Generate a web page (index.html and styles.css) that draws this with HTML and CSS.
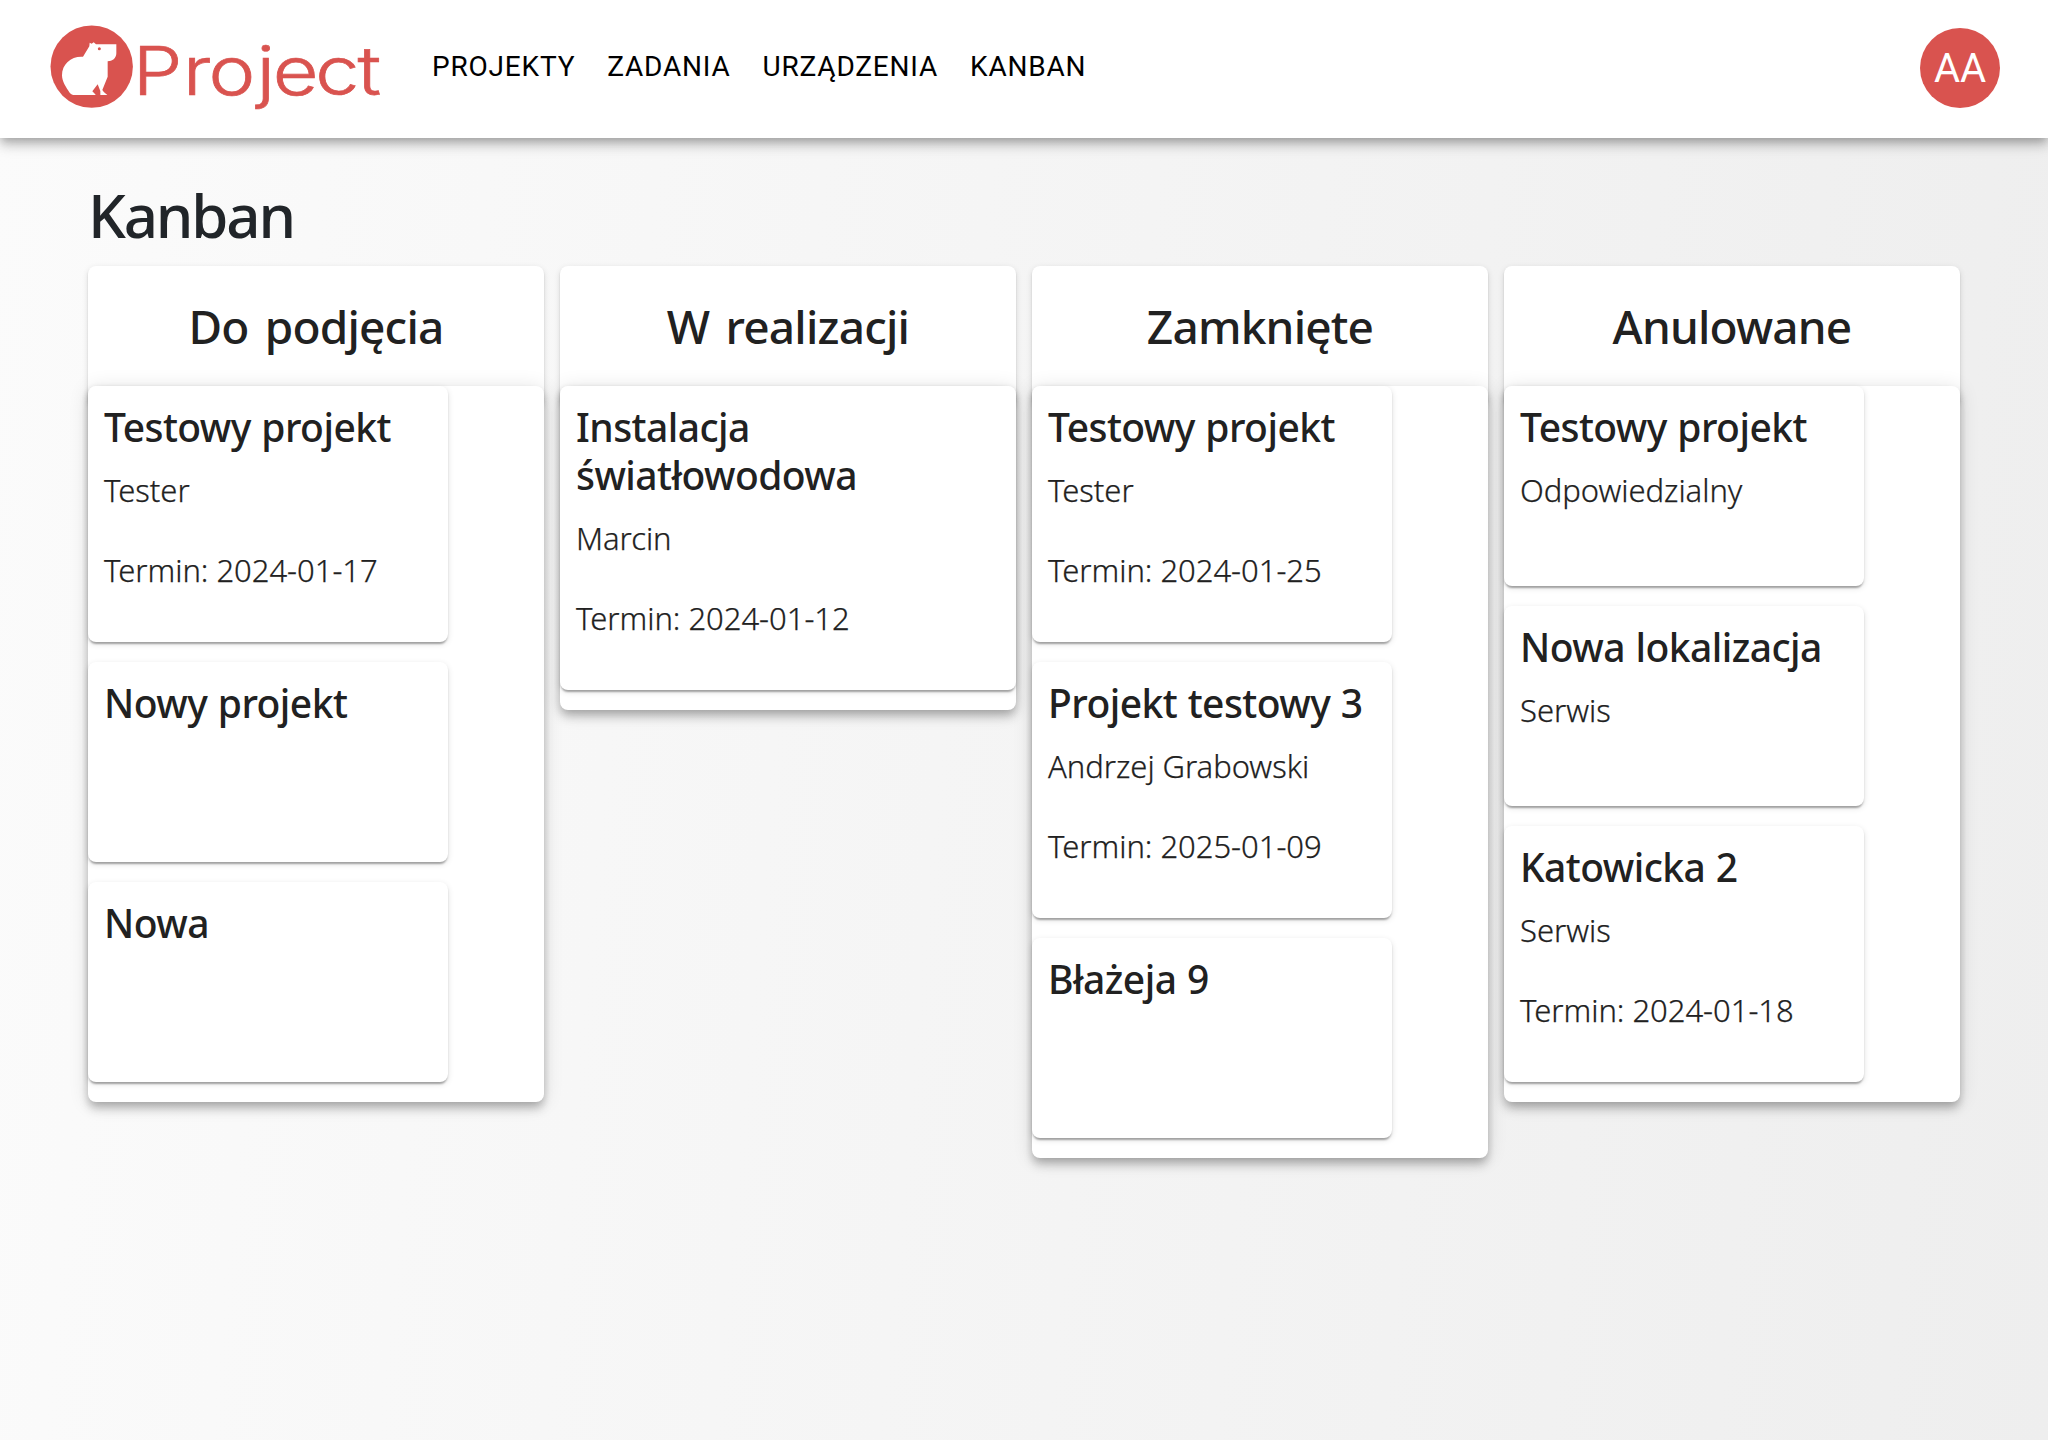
FILE: index.html
```html
<!DOCTYPE html>
<html lang="pl">
<head>
<meta charset="utf-8">
<title>Kanban</title>
<link rel="stylesheet" href="styles.css">
</head>
<body>
<header class="topbar">
  <svg class="logo" width="340" height="100" viewBox="0 0 340 100" role="img" aria-label="Project">
    <circle cx="43.7" cy="50.6" r="41.2" fill="#d9534f"/>
    <g transform="translate(-8 0) scale(.33333)">
      <path fill="#fff" d="M105 237C97 237 93 235 89 230C78 214 66 196 66 178C66 145 92 122 124 122H129L148 91L149 80L155 83L161 79L168 85H229V112C229 127 217 136 203 136V182L187 222C192 230 198 233 202 237H181V225L173 205L157 226C161 231 165 233 167 237Z"/>
      <circle cx="178" cy="98" r="4.5" fill="#d9534f"/>
    </g>
    <text class="logo-text" transform="scale(1.17 1)" y="79" x="72.4 115.4 137.2 178.2 192.2 228.4 264.6">Project</text>
  </svg>
  <nav class="nav">
    <a>PROJEKTY</a><a>ZADANIA</a><a>URZĄDZENIA</a><a>KANBAN</a>
  </nav>
  <div class="avatar">AA</div>
</header>
<main class="page">
  <h1 class="page-title">Kanban</h1>
  <div class="board">
    <section class="column">
      <h2 class="column-title">Do podjęcia</h2>
      <div class="column-body">
        <article class="card"><h3>Testowy projekt</h3><p>Tester</p><p>Termin: 2024-01-17</p></article>
        <article class="card"><h3>Nowy projekt</h3></article>
        <article class="card"><h3>Nowa</h3></article>
      </div>
    </section>
    <section class="column">
      <h2 class="column-title">W realizacji</h2>
      <div class="column-body">
        <article class="card card-wide"><h3>Instalacja<br>światłowodowa</h3><p>Marcin</p><p>Termin: 2024-01-12</p></article>
      </div>
    </section>
    <section class="column">
      <h2 class="column-title">Zamknięte</h2>
      <div class="column-body">
        <article class="card"><h3>Testowy projekt</h3><p>Tester</p><p>Termin: 2024-01-25</p></article>
        <article class="card"><h3>Projekt testowy 3</h3><p>Andrzej Grabowski</p><p>Termin: 2025-01-09</p></article>
        <article class="card"><h3>Błażeja 9</h3></article>
      </div>
    </section>
    <section class="column">
      <h2 class="column-title">Anulowane</h2>
      <div class="column-body">
        <article class="card"><h3>Testowy projekt</h3><p>Odpowiedzialny</p></article>
        <article class="card"><h3>Nowa lokalizacja</h3><p>Serwis</p></article>
        <article class="card"><h3>Katowicka 2</h3><p>Serwis</p><p>Termin: 2024-01-18</p></article>
      </div>
    </section>
  </div>
</main>
</body>
</html>
```
FILE: styles.css
```css
* { box-sizing: border-box; margin: 0; }
body {
  min-height: 1440px;
  font-family: "Noto Sans", sans-serif;
  color: #212121;
  background: linear-gradient(95deg, #fbfbfb, #eee);
}
.topbar {
  position: relative;
  display: flex;
  height: 138px;
  padding: 16px 48px;
  background: #fff;
  box-shadow: 0 4px 8px -2px rgba(0,0,0,.2), 0 8px 10px rgba(0,0,0,.14), 0 2px 20px rgba(0,0,0,.12);
}
.logo { flex: none; }
.logo-text { font-family: Inter, sans-serif; font-weight: 300; font-size: 67.5px; fill: #d9534f; stroke: #d9534f; stroke-width: .7px; }
.nav {
  display: flex;
  gap: 32px;
  padding: 27px 0 0 44px;
  font: 400 28px/48px Roboto, sans-serif;
  letter-spacing: .8px;
  color: #000;
  height: 75px;
}
.avatar {
  width: 80px;
  height: 80px;
  margin: 12px 0 0 auto;
  border-radius: 50%;
  background: #d9534f;
  color: #fff;
  font: 400 40px/82px Roboto, sans-serif;
  text-align: center;
}
.page { padding: 42px 88px 0; }
.page-title {
  height: 86px;
  font-size: 60px;
  line-height: 71px;
  font-weight: 550;
  letter-spacing: -2.2px;
  color: #212529;
}
.board { display: grid; grid-template-columns: repeat(4, 456px); gap: 16px; align-items: start; }
.column-title, .card {
  background: #fff;
  border-radius: 8px;
  box-shadow: 0 4px 2px -2px rgba(0,0,0,.2), 0 2px 2px rgba(0,0,0,.14), 0 2px 6px rgba(0,0,0,.12);
}
.column-title {
  height: 140px;
  margin-bottom: -20px;
  font-size: 46px;
  line-height: 121px;
  font-weight: 550;
  letter-spacing: -.8px;
  word-spacing: 5px;
  text-align: center;
}
.column-body {
  position: relative;
  display: flex;
  flex-direction: column;
  gap: 20px;
  padding-bottom: 20px;
  background: #fff;
  border-radius: 8px;
  box-shadow: 0 4px 8px -2px rgba(0,0,0,.2), 0 8px 10px rgba(0,0,0,.14), 0 2px 20px rgba(0,0,0,.12);
}
.card { width: 360px; min-height: 200px; padding: 17px 16px 48px; }
.card-wide { width: auto; }
.card h3 { font-size: 39px; line-height: 48px; font-weight: 550; letter-spacing: -.55px; word-spacing: 1px; margin-bottom: 15px; white-space: nowrap; }
.card p { font-size: 31px; line-height: 48px; font-weight: 350; letter-spacing: -.03px; -webkit-text-stroke: .25px #212121; white-space: nowrap; }
.card p + p { margin-top: 32px; }
```
